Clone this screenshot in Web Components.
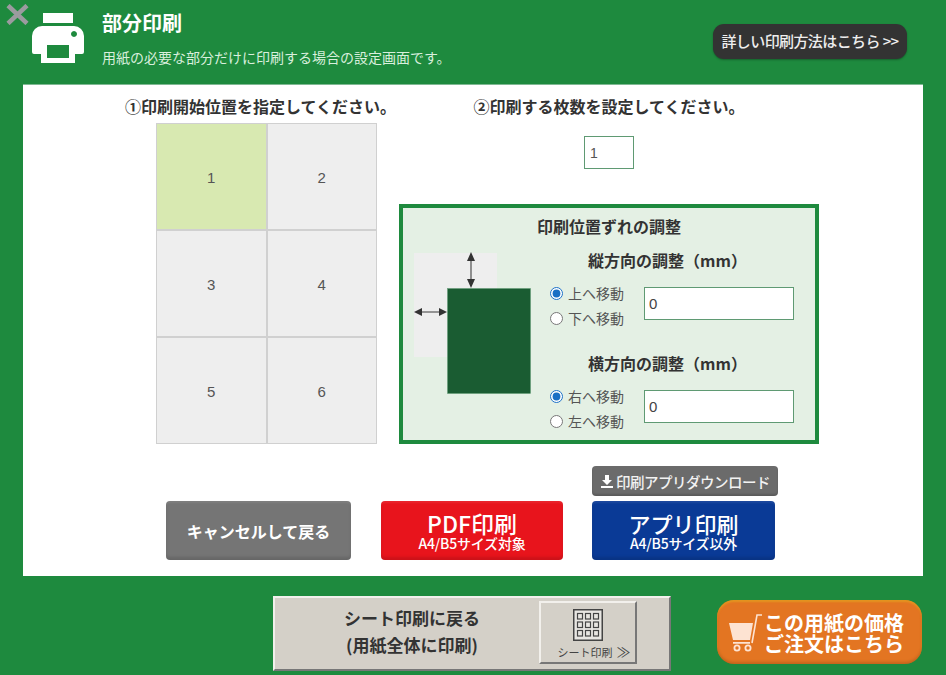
<!DOCTYPE html>
<html lang="ja"><head><meta charset="utf-8"><title>部分印刷</title>
<style>
html,body{margin:0;padding:0}
body{width:946px;height:675px;overflow:hidden;background:#1e8a3e;font-family:"Noto Sans CJK JP","Noto Sans",sans-serif;color:#333;display:flex;flex-direction:column}
</style></head><body>
<print-header title="部分印刷" subtitle="用紙の必要な部分だけに印刷する場合の設定画面です。" link="詳しい印刷方法はこちら &gt;&gt;"></print-header>
<print-panel>
  <pos-section slot="left" heading="①印刷開始位置を指定してください。"></pos-section>
  <copies-section slot="right" heading="②印刷する枚数を設定してください。"></copies-section>
  <adjust-box slot="right" heading="印刷位置ずれの調整"></adjust-box>
  <action-bar slot="actions"></action-bar>
</print-panel>
<print-footer></print-footer>
<script>
const def=(name,html)=>customElements.define(name,class extends HTMLElement{
  constructor(){super();this.attachShadow({mode:'open'})}
  connectedCallback(){this.shadowRoot.innerHTML=typeof html==='function'?html(this):html;}
});
const font='font-family:"Noto Sans CJK JP","Noto Sans",sans-serif;';
def('print-header',h=>`<style>
:host{display:flex;height:84px;flex:none;position:relative;box-sizing:border-box;padding:13px 39px 0 32px;color:#fff}
.x{position:absolute;left:6px;top:4px}
.ic{flex:none;width:52px;height:51px;margin-right:18px}
.t{flex:1;display:flex;flex-direction:column;margin-top:-2px}
h1{margin:0;font-size:20px;line-height:24px;font-weight:700;white-space:nowrap}
p{margin:12px 0 0;font-size:14px;line-height:20px;color:#d9efdd;white-space:nowrap}
a{flex:none;box-sizing:border-box;width:194px;height:35px;margin-top:11px;background:#333;border-radius:11px;color:#eee;font-size:15px;font-weight:500;letter-spacing:-.6px;line-height:34px;text-align:center;box-shadow:0 1px 2px rgba(0,0,0,.3);white-space:nowrap}
</style>
<svg class="x" width="23" height="21" viewBox="0 0 23 21"><path d="M2 1.5 21 19.5M21 1.5 2 19.5" stroke="#9b9b9f" stroke-width="4.5"/></svg>
<svg class="ic" viewBox="0 0 52 51"><path fill="#fff" d="M11 0h30v10H11z"/><path fill="#fff" fill-rule="evenodd" d="M10 13h32a10 10 0 0 1 10 10v16q0 2-2 2h-7v9H9v-9H2q-2 0-2-2V23a10 10 0 0 1 10-10zM15 32v13h22V32zM42 18a3 3 0 1 0 .01 0z"/></svg>
<div class="t"><h1>${h.getAttribute('title')}</h1><p>${h.getAttribute('subtitle')}</p></div>
<a>詳しい印刷方法はこちら &gt;&gt;</a>`);
def('print-panel',`<style>
:host{display:block;flex:none;box-sizing:border-box;width:900px;height:492px;margin:0 23px;background:#fff;padding:11px 0 0 133px;border-top:1px solid #7fb993}
.top{display:flex;gap:22px;height:348px}
.l{width:221px;flex:none}.r{width:420px;flex:none;display:flex;flex-direction:column}
</style><div class="top"><div class="l"><slot name="left"></slot></div><div class="r"><slot name="right"></slot></div></div><slot name="actions"></slot>`);
def('pos-section',h=>`<style>
:host{display:block}
h2{margin:-1px -40px 0 -41px;height:28px;font-size:16px;line-height:22px;font-weight:700;text-align:center;padding-right:11px;white-space:nowrap;color:#333}
.g{display:grid;grid-template-columns:repeat(2,1fr);grid-template-rows:repeat(3,1fr);width:221px;height:321px;box-sizing:border-box;border:1px solid #d0d0d0;background:#d0d0d0;gap:2px}
.c{background:#eee;display:flex;align-items:center;justify-content:center;padding-top:2px;font-size:15px;color:#555;font-family:"Liberation Sans",sans-serif}
.on{background:#d8e9b1}
</style><h2>${h.getAttribute('heading')}</h2>
<div class="g"><div class="c on">1</div><div class="c">2</div><div class="c">3</div><div class="c">4</div><div class="c">5</div><div class="c">6</div></div>`);
def('copies-section',h=>`<style>
:host{display:flex;flex-direction:column;align-items:center;height:108px;flex:none}
h2{margin:-1px 0 0;height:41px;font-size:16px;line-height:22px;font-weight:700;white-space:nowrap;color:#333}
input{box-sizing:border-box;width:50px;height:33px;border:1px solid #5f9a73;padding:0 5px;font:14px "Liberation Sans",sans-serif;color:#555;outline:0;background:#fff;border-radius:0}
</style><h2>${h.getAttribute('heading')}</h2><input value="1" aria-label="枚数">`);
def('adjust-row',h=>`<style>
:host{display:block;${font}}
h3{margin:0;height:26px;font-size:16px;line-height:22px;font-weight:700;text-align:center;padding-right:9px;white-space:nowrap;color:#333}
.b{display:flex;align-items:center;margin-top:3px}
.rs{width:94px;flex:none;display:flex;flex-direction:column;gap:6px;margin-top:6px}
label{display:flex;align-items:center;font-size:14px;line-height:19px;color:#555;white-space:nowrap}
input[type=radio]{width:13px;height:13px;margin:0 5px 0 0;accent-color:#1a6fc4}
input.n{box-sizing:border-box;width:150px;height:33px;border:1px solid #5f9a73;padding:0 4px;font:15px "Liberation Sans",sans-serif;color:#444;outline:0;border-radius:0;background:#fff}
</style><h3>${h.getAttribute('heading')}</h3><div class="b"><div class="rs">
<label><input type="radio" name="r" checked>${h.getAttribute('a')}</label><label><input type="radio" name="r">${h.getAttribute('b')}</label></div><input class="n" value="0" aria-label="調整量"></div>`);
def('adjust-box',h=>`<style>
:host{display:block;box-sizing:border-box;height:240px;border:4px solid #1e8a3e;background:#e4f0e4;padding:7px 0 0 11px}
h2{margin:0 0 0 -11px;height:24px;font-size:16px;line-height:22px;font-weight:700;text-align:center;color:#333}
.m{display:flex;margin-top:7px}
svg{flex:none;width:124px;height:142px;margin-top:6px}
.c{width:244px;margin-left:12px;display:flex;flex-direction:column;gap:24px;padding-top:3px}
</style><h2>${h.getAttribute('heading')}</h2><div class="m">
<svg viewBox="0 0 124 142"><rect x="0" y="1" width="83" height="104" fill="#eee"/><rect x="33.5" y="36.5" width="83" height="105" fill="#1a5c32" stroke="#5f9a73" stroke-width=".5"/>
<path d="M57 5v28M4 60h26" stroke="#777" stroke-width="1.6"/><path fill="#333" d="M57 0l4 9h-8zM57 36l-4-9h8zM0 60l8-4v8zM33 60l-8-4v8z"/></svg>
<div class="c"><adjust-row heading="縦方向の調整（mm）" a="上へ移動" b="下へ移動"></adjust-row><adjust-row heading="横方向の調整（mm）" a="右へ移動" b="左へ移動"></adjust-row></div></div>`);
def('big-button',h=>`<style>
:host{display:flex;flex-direction:column;align-items:center;justify-content:center;box-sizing:border-box;height:59px;border-radius:4px;color:#fff;background:var(--bg);box-shadow:inset 0 -3px 3px rgba(0,0,0,.12),inset 0 2px 2px rgba(255,255,255,.08);white-space:nowrap;text-align:center}
.a{font-size:var(--fs,22px);font-weight:var(--fw,500);line-height:24px}
.b{font-size:14px;line-height:16px;font-weight:500;letter-spacing:-.2px}
</style><div class="a">${h.getAttribute('main')}</div>${h.getAttribute('sub')?`<div class="b">${h.getAttribute('sub')}</div>`:''}`);
def('action-bar',`<style>
:host{display:flex;align-items:flex-end;margin:22px 0 0 10px;height:94px}
.cancel{width:185px;--bg:#757575;--fs:16px;--fw:700}
.pdf{width:182px;margin-left:30px;--bg:#e8141c;--fs:23px}
.col{margin-left:29px;width:186px;display:flex;flex-direction:column;gap:5px}
.app{width:183px;--bg:#0a3a96}
.dl{box-sizing:border-box;height:30px;background:#6b6b6b;border-radius:4px;color:#f2f2f2;font-size:14.5px;font-weight:500;letter-spacing:-.5px;display:flex;align-items:center;justify-content:center;gap:2px;white-space:nowrap;box-shadow:inset 0 -2px 2px rgba(0,0,0,.15)}
</style>
<big-button class="cancel" main="キャンセルして戻る"></big-button>
<big-button class="pdf" main="PDF印刷" sub="A4/B5サイズ対象"></big-button>
<div class="col"><div class="dl"><svg width="14" height="14" viewBox="0 0 14 14"><path fill="#fff" d="M5 1h4v5h3L7 11 2 6h3zM1 12h12v2H1z"/></svg>印刷アプリダウンロード</div><big-button class="app" main="アプリ印刷" sub="A4/B5サイズ以外"></big-button></div>`);
def('print-footer',`<style>
:host{display:flex;align-items:flex-start;padding:20px 0 0 273px}
.s{box-sizing:border-box;width:398px;height:75px;background:#d4d0c8;border:2px solid;border-color:#f2f0ec #777 #777 #f2f0ec;display:flex;padding:3px 32px 0 0;color:#333}
.tx{flex:1;box-sizing:border-box;padding:3px 0 0 10px;text-align:center;font-size:17px;font-weight:700;line-height:27px;white-space:nowrap}
.in{flex:none;box-sizing:border-box;width:98px;height:63px;border-style:solid;border-width:2px;border-color:#f2f0ec #777 #777 #f2f0ec;display:flex;flex-direction:column;align-items:center;padding-top:6px;font-size:11px;color:#444;line-height:14px;white-space:nowrap}
.in svg{display:block;margin-bottom:3px}
.in span{margin-left:12px}
.in b{font-weight:400;font-size:14px;margin-left:4px;line-height:14px}
.o{box-sizing:border-box;width:205px;height:64px;margin:4px 0 0 46px;background:#e37522;border-radius:17px;display:flex;align-items:center;padding:1px 0 0 12px;color:#fff;font-size:20px;font-weight:700;line-height:21px;white-space:nowrap;box-shadow:inset 0 2px 2px rgba(230,170,30,.6),inset 0 -2px 3px rgba(0,0,0,.15)}
.o svg{flex:none;margin-right:2px}
</style>
<div class="s"><div class="tx">シート印刷に戻る<br>(用紙全体に印刷)</div><div class="in">
<svg width="30" height="32" viewBox="0 0 30 32"><rect x=".75" y=".75" width="28.5" height="30.5" fill="#e8e6e2" stroke="#444" stroke-width="1.5"/><g fill="none" stroke="#444" stroke-width="1.2"><rect x="4.5" y="4.5" width="5" height="5.5"/><rect x="12.5" y="4.5" width="5" height="5.5"/><rect x="20.5" y="4.5" width="5" height="5.5"/><rect x="4.5" y="13" width="5" height="5.5"/><rect x="12.5" y="13" width="5" height="5.5"/><rect x="20.5" y="13" width="5" height="5.5"/><rect x="4.5" y="21.5" width="5" height="5.5"/><rect x="12.5" y="21.5" width="5" height="5.5"/><rect x="20.5" y="21.5" width="5" height="5.5"/></g></svg>
<span>シート印刷<b>≫</b></span></div></div>
<div class="o"><svg width="33" height="38" viewBox="0 0 33 38"><path fill="#fde3d2" d="M0 9h24l-3 17H4zM4 28h17v1.8H4z"/><path fill="none" stroke="#fde3d2" stroke-width="1.6" d="M33 1h-5l-5 28"/><circle cx="8" cy="34" r="2.6" fill="none" stroke="#fde3d2" stroke-width="1.8"/><circle cx="19" cy="34" r="2.6" fill="none" stroke="#fde3d2" stroke-width="1.8"/></svg><div>この用紙の価格<br>ご注文はこちら</div></div>`);
</script>
</body></html>
